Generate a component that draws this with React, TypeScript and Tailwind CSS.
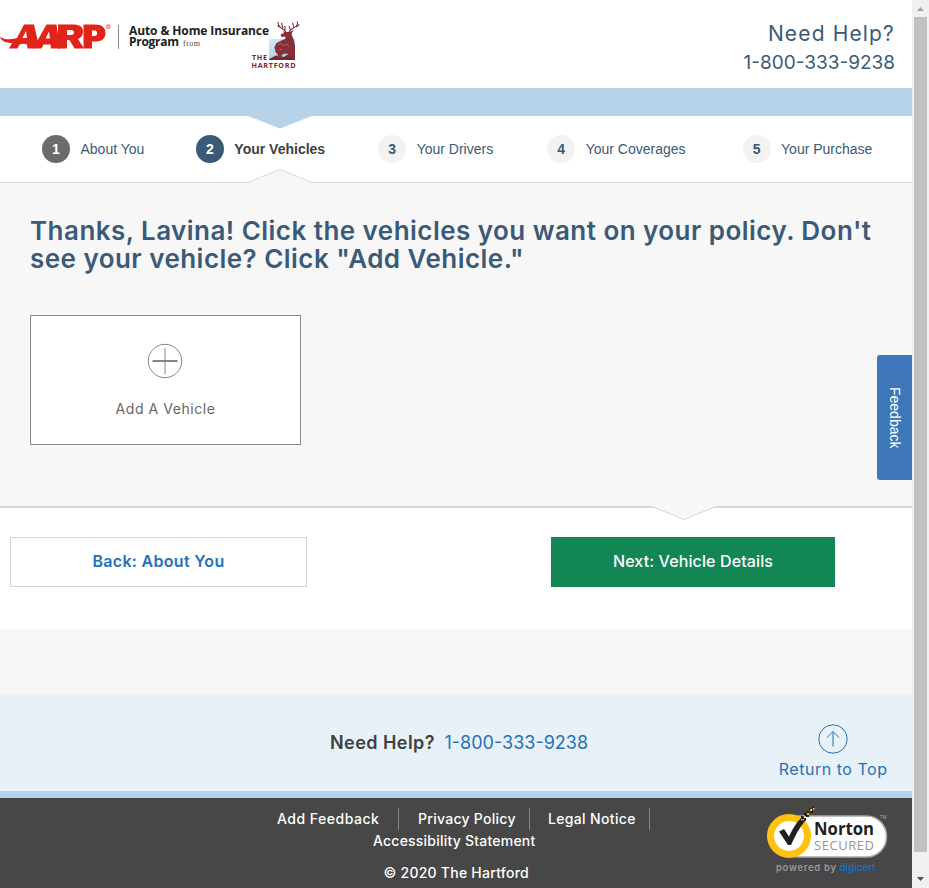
import React from "react";

const steps = [
  { n: 1, label: "About You", pad: "ml-[42px]", circle: "bg-[#6b6b6b] text-white", text: "text-[#3b5a78]" },
  { n: 2, label: "Your Vehicles", pad: "ml-[51.5px]", circle: "bg-[#3b5a78] text-white", text: "font-bold text-[#404040]" },
  { n: 3, label: "Your Drivers", pad: "ml-[53px]", circle: "bg-[#f2f2f2] text-[#3b5a78]", text: "text-[#3b5a78]" },
  { n: 4, label: "Your Coverages", pad: "ml-[54px]", circle: "bg-[#f2f2f2] text-[#3b5a78]", text: "text-[#3b5a78]" },
  { n: 5, label: "Your Purchase", pad: "ml-[57px]", circle: "bg-[#f2f2f2] text-[#3b5a78]", text: "text-[#3b5a78]" },
];

function HeaderLogo() {
  return (
    <svg width="310" height="70" viewBox="0 10 310 70" className="mt-[10px] block shrink-0">
      <defs>
        <linearGradient id="sky" x1="0" y1="0" x2="1" y2="1">
          <stop offset="0" stopColor="#d9eaf6" />
          <stop offset="1" stopColor="#8fbfe0" />
        </linearGradient>
      </defs>
      <g fill="#e2231a">
        <path d="M0 36.500C4 40 11 40 17 38L24 24.500H34L38 42L34 48.500H27.500L27 44.500C24.500 43.500 22 43.500 19.500 44.500L17.500 48.500H9L12 43C6 43 1 41 0 36.500ZM22.500 38H27L26 31Z" fillRule="evenodd" />
        <path d="M33 48.500L46.500 24.500H56.500L60 48.500H51L50.500 44.500H43.500L41.500 48.500ZM45.500 38.500H50L49 31.500Z" fillRule="evenodd" />
        <path d="M58 24.500H72.500C80 24.500 83 27 83 31.500C83 35 81.500 37.500 78 39L84 48.500H74.500L69.500 40H67V48.500H58ZM67 30V35H71C75 35 75 30 71 30Z" fillRule="evenodd" />
        <path d="M83.500 24.500H95C102 24.500 105.500 27.500 105.500 33C105.500 39 101.500 41.500 95 41.500H92V48.500H83.500ZM92 30.500V36H94.500C98 36 98 30.500 94.500 30.500Z" fillRule="evenodd" />
      </g>
      <circle cx="108.300" cy="26.700" r="2" fill="none" stroke="#e2231a" strokeWidth=".6" />
      <text x="107.200" y="28" fontFamily="Liberation Sans" fontSize="3.500" fill="#e2231a">R</text>
      <path d="M118.500 25V49" stroke="#8b8b8b" />
      <g fontFamily="Open Sans, sans-serif" fontWeight="700" fill="#202020">
        <text x="129" y="34.500" fontSize="12" textLength="140">Auto &amp; Home Insurance</text>
        <text x="129" y="46" fontSize="12" textLength="50">Program</text>
      </g>
      <text x="183" y="46" fontFamily="Liberation Serif" fontSize="8" fill="#444" textLength="17">from</text>
      <path d="M269 39H295V60H269Z" fill="url(#sky)" />
      <path d="M269 60V59L276 55.500L284 57L290 53H295V60Z" fill="#79272f" />
      <path d="M280.500 34.500L284 33L283 31L286 32L289.500 32L293.500 30L291.500 34L294 41L295 46V58H291L289 54L284 53.500L281.500 55.500L282 58H277L278 55L275.500 52L274.500 47L276.500 43L281.500 40.500L285 39L285.500 36.500L281.500 37Z" fill="#853038" />
      <path d="M278 45L281 43L283 46L287 44L289 47M279 50L282 49" fill="none" stroke="#bd8085" strokeWidth=".6" />
      <path d="M286 32C284 28 278 29 278 22M282 28.500L277.500 25.500M283 28L281.500 23M285 30L285 26M289 32C291 27 298 29 297.500 21.500M294 28L292.500 23M296 27L299.500 24.500M290.500 30L289 26" fill="none" stroke="#853038" strokeWidth="1.100" />
      <g fontFamily="Open Sans, sans-serif" fontWeight="700" fill="#79272f" fontSize="7.200">
        <text x="252" y="60" textLength="15">THE</text>
        <text x="251.500" y="67.500" textLength="44">HARTFORD</text>
      </g>
    </svg>
  );
}

function NortonSeal() {
  return (
    <svg width="130" height="72" viewBox="763 804 130 72" className="absolute left-[763px] top-[6px]">
      <rect x="779" y="816" width="107.500" height="41" rx="20" fill="#fff" stroke="#aaa" strokeWidth="1.500" />
      <circle cx="789" cy="836" r="18.500" fill="#fff" stroke="#ffc20e" strokeWidth="7" />
      <path d="M779 831.500L784 829L789 836.500C792 830 796 823 801 818L805 821C799 828 795 836 791 845H788Z" fill="#231f20" />
      <g fill="#231f20">
        <path d="M801 816h3v3h-3zM804 813h3v3h-3zM804 818h2v3h-2zM807 811h2v2h-2zM806 815h3v2h-3zM809 808h2v2h-2zM810 811h3v2h-3zM812 807h2v2h-2z" />
      </g>
      <path d="M803 815h1.500v1.500h-1.500zM807 813h2v2h-2zM810 809h2v2h-2zM813 808h1.500v1.500h-1.500zM801 819h1.500v1.500h-1.500z" fill="#ffc20e" />
      <text x="814" y="835" fontFamily="Open Sans, sans-serif" fontWeight="700" fontSize="18.500" fill="#231f20" textLength="60" lengthAdjust="spacingAndGlyphs">Norton</text>
      <text x="814" y="849.500" fontFamily="Open Sans, sans-serif" fontSize="13" fill="#969696" textLength="60">SECURED</text>
      <text x="880" y="819" fontFamily="Liberation Sans" fontSize="4.500" fill="#aaa">TM</text>
      <text x="776" y="871" fontFamily="Inter, sans-serif" fontWeight="600" fontSize="9.500" fill="#999" textLength="60">powered by</text>
      <text x="839.500" y="871" fontFamily="Inter, sans-serif" fontSize="10" fill="#0f75c8" textLength="36">digicert</text>
    </svg>
  );
}

export default function App() {
  return (
    <div className="flex h-[888px] w-[929px] overflow-hidden bg-white font-[Inter,sans-serif] whitespace-nowrap">
      <div className="relative flex w-[912px] shrink-0 flex-col">
        <header className="flex h-[88px] shrink-0 justify-between">
          <HeaderLogo />
          <div className="mr-[17px] pt-[19px] text-right text-[#3b5a78]">
            <div className="text-[21px] leading-[29px] tracking-[1.15px]">Need Help?</div>
            <div className="text-[19px] leading-[29px]">1-800-333-9238</div>
          </div>
        </header>

        <div className="h-[28px] shrink-0 bg-[#b7d3e9]" />

        <nav className="relative flex h-[67px] shrink-0 items-center border-b border-[#d6d6d6] font-['Liberation_Sans',sans-serif] text-[14px]">
          <svg width="64" height="13" className="absolute left-[248px] top-0"><path d="M0 0H64L32 12.500Z" fill="#b7d3e9" /></svg>
          <svg width="66" height="15" className="absolute left-[247px] top-[53px]"><path d="M1 14L33 1L65 14V15H1Z" fill="#f7f7f7" /><path d="M1 13.500L33 .5L65 13.500" fill="none" stroke="#d6d6d6" /></svg>
          {steps.map((s) => (
            <div key={s.n} className={"flex items-center " + s.pad}>
              <span className={"flex h-7 w-7 items-center justify-center rounded-full font-bold " + s.circle}>{s.n}</span>
              <span className={"ml-[10.5px] " + s.text}>{s.label}</span>
            </div>
          ))}
        </nav>

        <main className="h-[323px] shrink-0 bg-[#f7f7f7] px-[30px] pt-[34px]">
          <h1 className="text-[26px] leading-[28px] font-semibold text-[#3b5a78]">
            <span className="block tracking-[0.46px]">Thanks, Lavina! Click the vehicles you want on your policy. Don't</span>
            <span className="block tracking-[0.46px]">see your vehicle? Click "Add Vehicle."</span>
          </h1>
          <button className="mt-[42px] flex h-[130px] w-[271px] flex-col items-center border border-[#888] bg-white pt-[27px]">
            <svg width="36" height="36" fill="none" stroke="#858585" className="mr-px"><circle cx="18" cy="18" r="16.700" /><path d="M18 5V31" /><path d="M5.500 18H30.500" strokeWidth="2" /></svg>
            <span className="mt-[20px] text-[14px] leading-[20px] tracking-[0.55px] text-[#666]">Add A Vehicle</span>
          </button>
        </main>

        <section className="relative flex h-[123px] shrink-0 items-start border-t-2 border-[#d6d6d6] pt-[29px] text-[16px] font-semibold">
          <svg width="66" height="15" className="absolute left-[651px] top-[-2px]"><path d="M1 0H65V.5L33 13L1 .5Z" fill="#f7f7f7" /><path d="M1 .5L33 13.500L65 .5" fill="none" stroke="#d6d6d6" /></svg>
          <button className="ml-[10px] h-[50px] w-[297px] border border-[#d6d6d6] pb-0.5 tracking-[0.3px] text-[#2372b9]">Back: About You</button>
          <button className="ml-[244px] h-[50px] w-[284px] bg-[#128655] pb-0.5 font-medium tracking-[0.12px] text-white">Next: Vehicle Details</button>
        </section>

        <div className="h-[65px] shrink-0 bg-[#f7f7f7]" />

        <section className="relative flex h-[104px] shrink-0 items-start justify-between border-b-[7px] border-[#b7d3e9] bg-[#e9f1f8]">
          <div className="ml-[330px] mt-[37px] flex items-center text-[18px] leading-6">
            <span className="font-semibold tracking-[0.45px] text-[#404040]">Need Help?</span>
            <span className="ml-[9.5px] text-[#2372b9]">1-800-333-9238</span>
          </div>
          <a className="mr-[24.5px] mt-[30px] flex flex-col items-center text-[#2372b9]">
            <svg width="30" height="30" fill="none" stroke="currentColor"><circle cx="15" cy="15" r="14.200" /><path d="M15 22.500V8M9 13.500L15 7.500L21 13.500" /></svg>
            <span className="mt-[5px] text-[16px] leading-5 tracking-[0.52px]">Return to Top</span>
          </a>
        </section>

        <footer className="relative h-[90px] shrink-0 bg-[#474747] text-[14px] font-medium text-white">
          <div className="flex h-[32px] items-end pl-[277px]">
            <span className="h-[22px] w-[122px] border-r border-[#888] tracking-[0.5px]">Add Feedback</span>
            <span className="h-[22px] w-[131px] border-r border-[#888] pl-[19px] tracking-[0.28px]">Privacy Policy</span>
            <span className="h-[22px] w-[120px] border-r border-[#888] pl-[18px] tracking-[0.34px]">Legal Notice</span>
          </div>
          <div className="pl-[373px] leading-[22px] tracking-[0.22px]">Accessibility Statement</div>
          <div className="mt-[10px] pl-[383.5px] leading-[22px] tracking-[0.25px]">© 2020 The Hartford</div>
          <NortonSeal />
        </footer>

        <div className="absolute top-[355px] right-0 flex h-[125px] w-[35px] items-center justify-center rounded-l-[3px] bg-[#3d76b9] font-['Liberation_Sans',sans-serif] text-[14px] text-white [writing-mode:vertical-rl]">Feedback</div>
      </div>

      <div className="flex w-[17px] shrink-0 flex-col items-center bg-[#f0f0f0]">
        <svg width="17" height="17"><path d="M5 11H12L8.500 7Z" fill="#a3a3a3" /></svg>
        <div className="h-[835px] w-[13px] bg-[#c1c1c1]" />
        <svg width="17" height="36"><path d="M5 25H12L8.500 29Z" fill="#505050" /></svg>
      </div>
    </div>
  );
}
